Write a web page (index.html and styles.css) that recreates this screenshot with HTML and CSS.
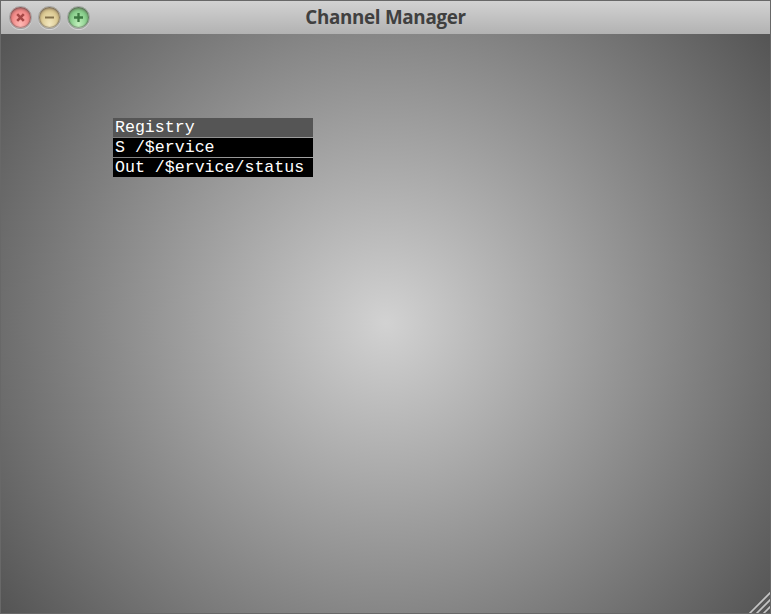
FILE: index.html
```html
<!DOCTYPE html>
<html lang="en">
<head>
<meta charset="utf-8">
<title>Channel Manager</title>
<link rel="stylesheet" href="styles.css">
</head>
<body>
<div class="window">
  <header class="titlebar">
    <div class="controls">
      <span class="control close"><svg viewBox="0 0 21 21"><path d="M7.2 7.2l6.6 6.6m0-6.6l-6.6 6.6"/></svg></span>
      <span class="control minimize"><svg viewBox="0 0 21 21"><path d="M6 10.5h9"/></svg></span>
      <span class="control zoom"><svg viewBox="0 0 21 21"><path d="M6 10.5h9M10.5 6v9"/></svg></span>
    </div>
    <h1 class="title">Channel Manager</h1>
  </header>
  <main class="canvas">
    <section class="node">
      <div class="row heading">Registry</div>
      <div class="row">S /$ervice</div>
      <div class="row">Out /$ervice/status</div>
    </section>
    <svg class="grip" viewBox="0 0 23 23"><path d="M0 24L24 0M7 24L24 7M14 24l10-10"/></svg>
  </main>
</div>
</body>
</html>
```
FILE: styles.css
```css
* { box-sizing: border-box; }
body { margin: 0; overflow: hidden; }
.window {
  display: flex;
  flex-direction: column;
  width: 771px;
  height: 614px;
  border: 1px solid #686868;
  background: #686868;
}
.titlebar {
  display: grid;
  grid-template-columns: 96px 1fr 96px;
  align-items: center;
  height: 33px;
  background: linear-gradient(#d2d2d2, #b2b2b2);
}
.controls { display: flex; gap: 6px; padding-left: 8px; }
.control {
  width: 23px;
  height: 23px;
  border-radius: 50%;
  border: 1px solid #a0a0a0;
  box-shadow: inset 0 0 1px 1px rgba(80, 70, 70, .45), inset 0 2px 3px rgba(80, 60, 60, .45), 0 1px 0 #d2d2d2;
}
.control svg { display: block; width: 21px; height: 21px; fill: none; stroke-width: 2; }
.close { background: radial-gradient(ellipse at 50% 85%, #ffb9b5, #f08583 65%); }
.close svg { stroke: #a64846; stroke-width: 2.6; }
.minimize { background: radial-gradient(ellipse at 50% 85%, #f3e8c0, #d8c58c 65%); }
.minimize svg { stroke: #83714a; }
.zoom { background: radial-gradient(ellipse at 50% 85%, #c2f0bd, #7fc984 65%); }
.zoom svg { stroke: #3c7841; stroke-width: 2.3; }
.title {
  margin: 0;
  text-align: center;
  white-space: nowrap;
  color: #404040;
  font: bold 18.8px/33px "Open Sans", sans-serif;
  letter-spacing: -.3px;
}
.canvas {
  position: relative;
  flex: 1;
  overflow: hidden;
  background: radial-gradient(circle farthest-corner at 385px 289px, #d2d2d2, #545454);
}
.node {
  position: absolute;
  left: 112px;
  top: 84px;
  width: 200px;
  display: grid;
  grid-template-rows: repeat(3, 19px);
  row-gap: 1px;
}
.row {
  padding-left: 2px;
  background: #000;
  color: #fff;
  font: 16.6px/19px "Liberation Mono", monospace;
  white-space: pre;
}
.heading { background: #555; }
.grip {
  position: absolute;
  right: -1px;
  bottom: -1px;
  width: 23px;
  height: 23px;
  fill: none;
  stroke: #c4c4c4;
  stroke-width: 1.6;
}
```
